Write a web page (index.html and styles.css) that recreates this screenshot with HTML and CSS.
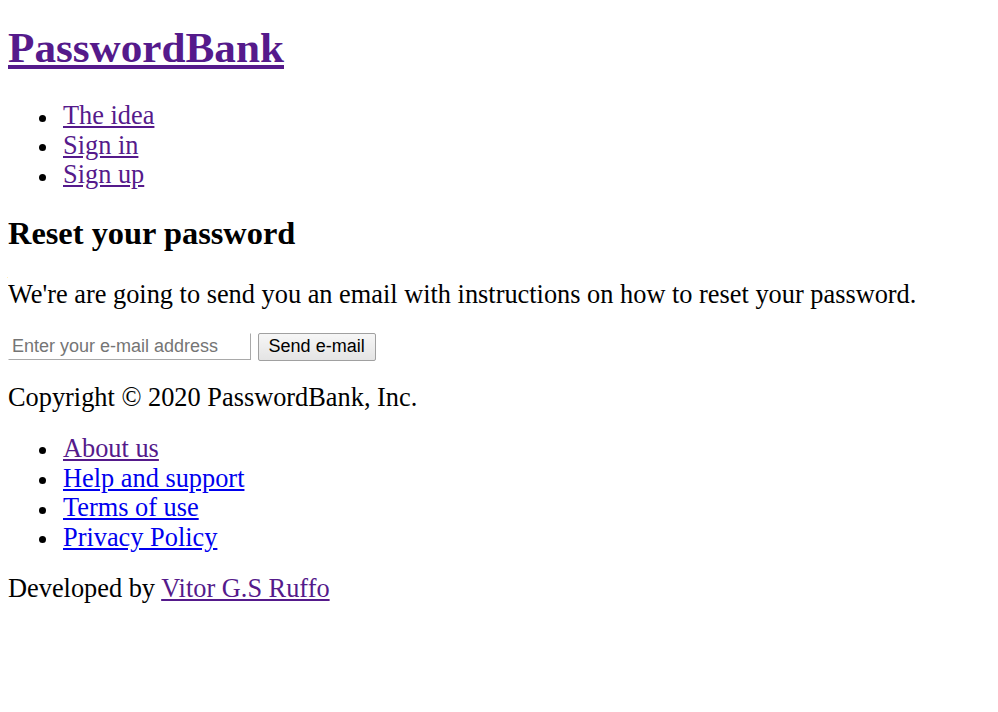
FILE: index.html
```html
<!DOCTYPE html>
<html>
<head>
<meta charset="utf-8">
<title>PasswordBank</title>
<link rel="stylesheet" href="styles.css">
</head>
<body>
<header class="site-header">
  <h1 class="brand"><a class="visited" href="#">PasswordBank</a></h1>
  <ul class="menu top-menu">
    <li><a class="visited" href="#">The idea</a></li>
    <li><a class="visited" href="#">Sign in</a></li>
    <li><a class="visited" href="#">Sign up</a></li>
  </ul>
</header>
<main>
  <h2 class="title">Reset your password</h2>
  <p class="lead">We're are going to send you an email with instructions on how to reset your password.</p>
  <form class="reset-form">
    <input class="email-input" type="email" placeholder="Enter your e-mail address"> <button class="send-btn" type="button">Send e-mail</button>
  </form>
</main>
<footer>
  <p class="copy">Copyright © 2020 PasswordBank, Inc.</p>
  <ul class="menu">
    <li><a class="visited" href="#">About us</a></li>
    <li><a class="link" href="#">Help and support</a></li>
    <li><a class="link" href="#">Terms of use</a></li>
    <li><a class="link" href="#">Privacy Policy</a></li>
  </ul>
  <p class="dev">Developed by <a class="visited" href="#">Vitor G.S Ruffo</a></p>
</footer>
</body>
</html>
```
FILE: styles.css
```css
html { background: #fff; }
body {
  margin: 8px;
  font-family: "Liberation Serif", "Times New Roman", serif;
  font-size: 26.35px;
  line-height: 29.7px;
  color: #000;
}
a { text-decoration: underline; }
.visited { color: #551a8b; }
.link { color: #0000ee; }
.brand {
  font-size: 43.2px;
  line-height: normal;
  margin: 15px 0 29px;
}
.menu {
  margin: 21.6px 0;
  padding-left: 55px;
  list-style: none;
}
.menu li::before {
  content: "";
  display: inline-block;
  width: 7px;
  height: 7px;
  border-radius: 50%;
  background: #000;
  margin-left: -24px;
  margin-right: 17px;
  vertical-align: 2.5px;
}
.title {
  font-size: 32.4px;
  line-height: normal;
  margin: 25px 0 28px;
}
.lead, .copy, .dev { margin: 21.6px 0; }
.lead { margin-bottom: 19.6px; }
.copy { margin-bottom: 19.6px; }
.dev { margin-bottom: 0; }
.reset-form { margin: 0; }
.email-input {
  box-sizing: border-box;
  font-family: "Liberation Sans", Arial, sans-serif;
  font-size: 18px;
  width: 243px;
  height: 27px;
  padding: 1px 3px;
  border: 1px solid #fff;
  border-right-color: #a9a9a9;
  border-bottom-color: #a9a9a9;
  color: #000;
  background: #fff;
  margin: 0;
}
.email-input::placeholder { color: #757575; }
.send-btn {
  box-sizing: border-box;
  font-family: "Liberation Sans", Arial, sans-serif;
  font-size: 18px;
  height: 28px;
  padding: 0 10px;
  border: 1px solid #a0a0a0;
  border-radius: 2px;
  background: linear-gradient(#f6f6f6, #e4e4e4);
  color: #000;
  margin: 0;
}
```
